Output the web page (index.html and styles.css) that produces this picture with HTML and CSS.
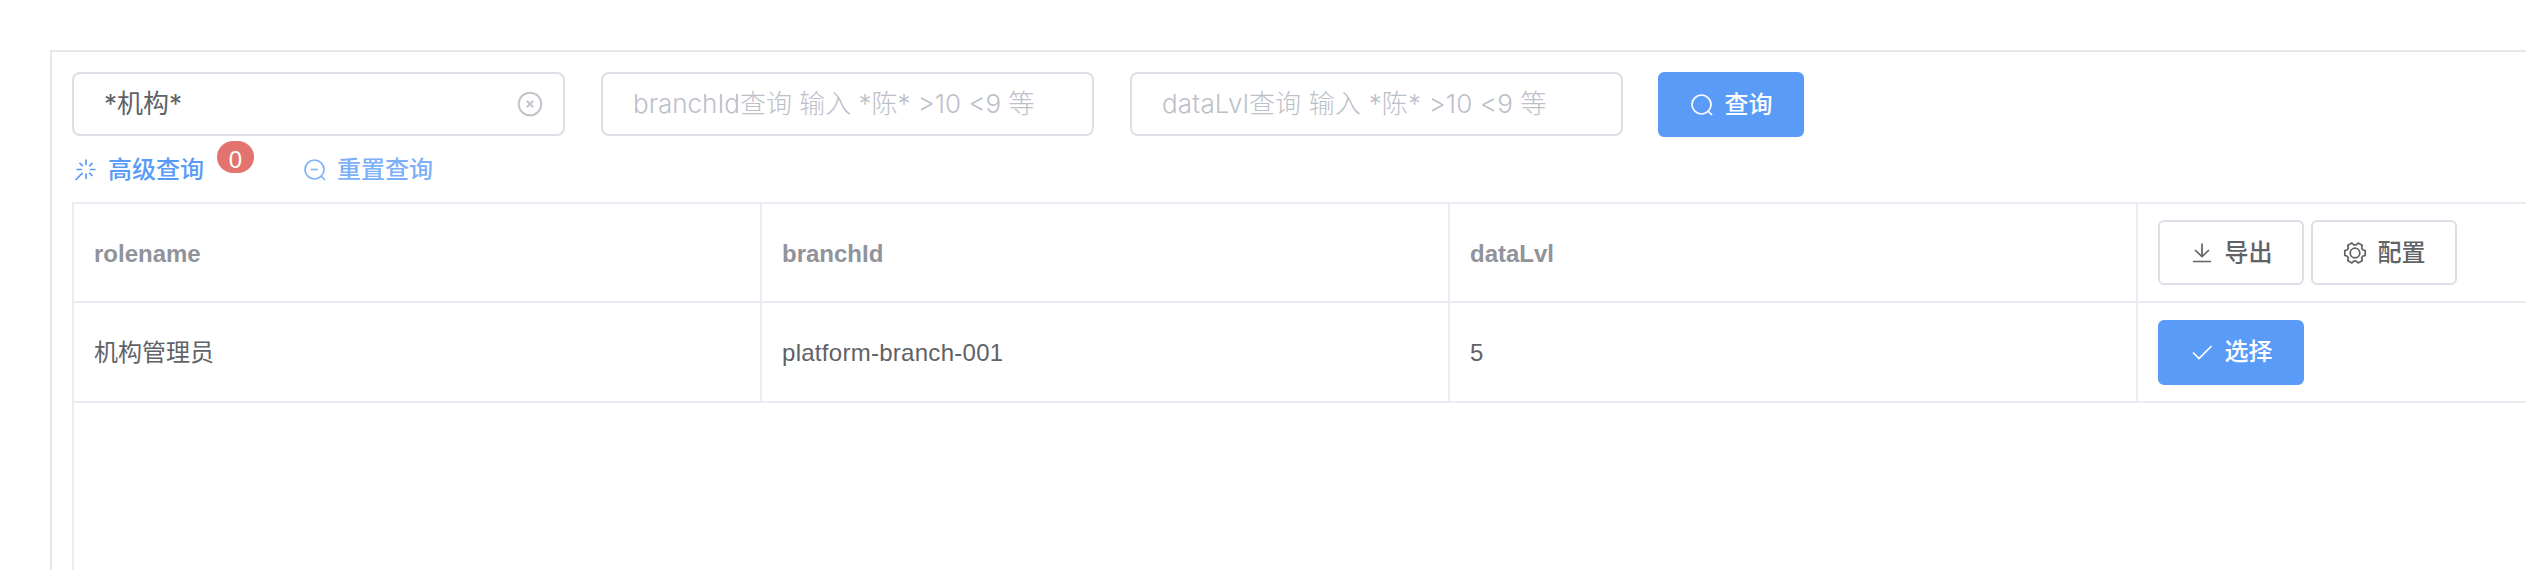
FILE: index.html
```html
<!DOCTYPE html>
<html lang="zh">
<head>
<meta charset="utf-8">
<title>角色查询</title>
<link rel="stylesheet" href="styles.css">
</head>
<body>
<main class="panel">
  <div class="filters">
    <div class="field filled"><span>*机构*</span>
      <svg class="clear" viewBox="0 0 26 26"><circle cx="13" cy="13" r="11.3"/><path d="M9.700 9.700l6.600 6.600M16.300 9.700l-6.600 6.600"/></svg>
    </div>
    <div class="field"><span>branchId查询 输入 *陈* &gt;10 &lt;9 等</span></div>
    <div class="field"><span class="level">dataLvl查询 输入 *陈* &gt;10 &lt;9 等</span></div>
    <button class="btn primary search">
      <svg class="icon" viewBox="0 0 24 24"><circle cx="11.5" cy="11.5" r="9.5"/><path d="M18 18l4 4"/></svg><span>查询</span>
    </button>
  </div>
  <div class="links">
    <a class="link advanced">
      <svg class="icon" viewBox="0 0 24 24"><path d="M12 1.500v5.500M12 15.500v5.500M2.500 11.500h5.500M16 11.500h5.500M5.500 4.800l3.300 3.300M18.500 4.800l-3.300 3.300M18.500 18l-3.300-3.300M1.500 22l7.200-7.200"/></svg><span>高级查询</span>
    </a>
    <span class="badge">0</span>
    <a class="link reset">
      <svg class="icon" viewBox="0 0 24 24"><circle cx="11.500" cy="11.500" r="9.500"/><path d="M18 18l4 4M8 11.500h7"/></svg><span>重置查询</span>
    </a>
  </div>
  <section class="table">
    <div class="row head">
      <div class="cell"><span>rolename</span></div>
      <div class="cell"><span>branchId</span></div>
      <div class="cell"><span>dataLvl</span></div>
      <div class="cell actions">
        <button class="btn plain"><svg class="icon" viewBox="0 0 24 24"><path d="M12 2.500v13M5 9l7 6.500L19 9M3 20.500h18"/></svg><span>导出</span></button>
        <button class="btn plain"><svg class="icon" viewBox="0 0 24 24"><path stroke-linejoin="round" d="M22.200 9.600v4.800l-2.500 .8-1 1.800.5 2.700-4.100 2.300-1.900-1.800h-2.400L8.900 22l-4.100-2.300.5-2.700-1-1.800-2.500-.8V9.600l2.500-.8 1-1.800-.5-2.700L8.900 2l1.900 1.800h2.400L15.100 2l4.100 2.300-.5 2.700 1 1.800z"/><circle cx="12" cy="12" r="4.800"/></svg><span>配置</span></button>
      </div>
    </div>
    <div class="row">
      <div class="cell"><span>机构管理员</span></div>
      <div class="cell"><span class="code">platform-branch-001</span></div>
      <div class="cell"><span>5</span></div>
      <div class="cell actions last">
        <button class="btn primary"><svg class="icon" viewBox="0 0 24 24"><path d="M3 12.500l6 6L21.500 6"/></svg><span>选择</span></button>
      </div>
    </div>
  </section>
</main>
</body>
</html>
```
FILE: styles.css
```css
* { box-sizing: border-box; }
body {
  margin: 0;
  height: 570px;
  overflow: hidden;
  background: #fff;
  color: #606266;
  font: 24px/32px "Liberation Sans", "Noto Sans CJK SC", sans-serif;
}
svg { fill: none; stroke: currentColor; stroke-width: 1.7; flex: none; }
span { white-space: nowrap; }
.panel {
  margin: 50px 0 0 50px;
  height: 520px;
  padding: 20px 0 0 20px;
  border: solid #e8e8e8;
  border-width: 2px 0 0 2px;
  display: flex;
  flex-direction: column;
}
.filters { display: flex; height: 65px; gap: 36px; }
.field {
  width: 493px;
  height: 64px;
  padding: 0 20px 0 30px;
  border: 2px solid #dcdfe6;
  border-radius: 8px;
  display: flex;
  align-items: center;
  justify-content: space-between;
  font-family: Inter, "Noto Sans CJK SC", sans-serif;
  font-size: 26px;
  font-weight: 300;
  color: #bcc0c9;
}
.filled { color: #606266; font-weight: 400; }
.level { letter-spacing: 0.18px; }
.clear { width: 26px; height: 26px; color: #c0c4cc; stroke-width: 2; }
.btn {
  width: 146px;
  height: 65px;
  padding: 0;
  border: 2px solid #dcdfe6;
  border-radius: 6px;
  display: flex;
  align-items: center;
  justify-content: center;
  gap: 11px;
  background: #fff;
  color: #606266;
  font: 500 24px/32px "Liberation Sans", "Noto Sans CJK SC", sans-serif;
}
.primary { background: #5b9bf8; border-color: #5b9bf8; color: #fff; }
.search { margin-left: -1px; }
.icon { width: 24px; height: 24px; }
.links { display: flex; height: 65px; padding-top: 4px; align-items: flex-start; }
.link { display: flex; align-items: center; gap: 10px; margin-top: 12px; height: 34px; color: #5b9bf8; font-weight: 500; }
.advanced { width: 145px; padding-left: 2px; }
.badge {
  width: 37px;
  height: 32px;
  border-radius: 16px;
  background: #e3736e;
  color: #fff;
  text-align: center;
  line-height: 37px;
}
.reset { margin-left: 49px; color: #7cb0f9; }
.table { flex: 1; border: solid #ebecf3; border-width: 2px 0 0 2px; }
.row { display: grid; grid-template-columns: 688px 688px 688px 1fr; height: 99px; }
.cell {
  padding: 0 20px;
  border: solid #ebecf3;
  border-width: 0 2px 2px 0;
  display: flex;
  align-items: center;
}
.cell > span { padding-top: 2px; }
.head { color: #909399; font-weight: 700; }
.code { letter-spacing: 0.28px; }
.actions { gap: 7px; border-right: 0; }
.last { height: 100px; }
```
